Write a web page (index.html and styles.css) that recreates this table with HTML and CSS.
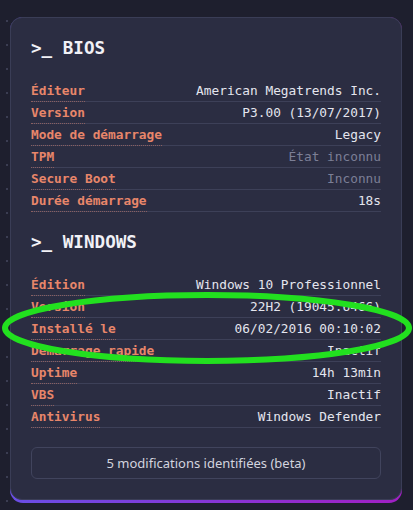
FILE: index.html
```html
<!DOCTYPE html>
<html lang="fr">
<head>
    <meta charset="UTF-8">
    <meta name="viewport" content="width=device-width, initial-scale=1.0">
    <title>Système</title>
    <link rel="stylesheet" href="styles.css">
</head>
<body>
    <div class="card-frame">
        <div class="card">
            <!-- BIOS -->
            <section class="section">
                <h2 class="section-title">&gt;_ BIOS</h2>
                <div class="info-row"><span class="info-label">Éditeur</span><span class="info-value">American Megatrends Inc.</span></div>
                <div class="info-row"><span class="info-label">Version</span><span class="info-value">P3.00 (13/07/2017)</span></div>
                <div class="info-row"><span class="info-label">Mode de démarrage</span><span class="info-value">Legacy</span></div>
                <div class="info-row"><span class="info-label">TPM</span><span class="info-value muted">État inconnu</span></div>
                <div class="info-row"><span class="info-label">Secure Boot</span><span class="info-value muted">Inconnu</span></div>
                <div class="info-row"><span class="info-label">Durée démarrage</span><span class="info-value">18s</span></div>
            </section>

            <!-- Windows -->
            <section class="section">
                <h2 class="section-title">&gt;_ WINDOWS</h2>
                <div class="info-row"><span class="info-label">Édition</span><span class="info-value">Windows 10 Professionnel</span></div>
                <div class="info-row"><span class="info-label">Version</span><span class="info-value">22H2 (19045.6466)</span></div>
                <div class="info-row"><span class="info-label">Installé le</span><span class="info-value">06/02/2016 00:10:02</span></div>
                <div class="info-row"><span class="info-label">Démarrage rapide</span><span class="info-value">Inactif</span></div>
                <div class="info-row"><span class="info-label">Uptime</span><span class="info-value">14h 13min</span></div>
                <div class="info-row"><span class="info-label">VBS</span><span class="info-value">Inactif</span></div>
                <div class="info-row"><span class="info-label">Antivirus</span><span class="info-value">Windows Defender</span></div>
            </section>

            <button type="button" class="changes-btn">5 modifications identifiées (beta)</button>
        </div>
    </div>

    <!-- annotation -->
    <svg class="annotation" width="413" height="510" viewBox="0 0 413 510">
        <ellipse cx="207" cy="328" rx="202" ry="33" fill="none" stroke="#22e01f" stroke-width="6"/>
    </svg>
</body>
</html>
```

FILE: styles.css
```css
body {
    margin: 0;
    position: relative;
    min-height: 510px;
    background-color: #1e1f2e;
    background-image: radial-gradient(circle, #3b3d52 1px, transparent 1.5px);
    background-size: 24px 24px;
    background-position: -5px 9px;
    font-family: "DejaVu Sans Mono", monospace;
}
.card-frame {
    margin: 17px 11px 0 10px;
    border-radius: 13px;
    padding-bottom: 3px;
    background: linear-gradient(90deg, #6a4ee6, #a11fc4);
}
.card {
    background: #2b2d42;
    border: 1px solid #3a3d56;
    border-radius: 12px;
    padding: 18px 20px 20px 20px;
}
.section {
    margin-bottom: 18px;
}
.section-title {
    margin: 0 0 20px 0;
    font-size: 1.1rem;
    line-height: 24px;
    font-weight: bold;
    color: #f1f1f6;
}
.info-row {
    display: flex;
    justify-content: space-between;
    border-bottom: 1px solid #3d4058;
    font-size: 0.8rem;
    line-height: 21px;
}
.info-label {
    color: #e8866a;
    font-weight: bold;
    border-bottom: 1px dotted rgba(232, 134, 106, 0.45);
    margin-bottom: -1px;
}
.info-value {
    color: #e4e5ee;
}
.info-value.muted {
    color: #7c7f96;
}
.changes-btn {
    display: block;
    width: 100%;
    height: 32px;
    margin-top: 19px;
    background: #2b2d42;
    border: 1px solid #41445d;
    border-radius: 6px;
    color: #d3d4df;
    font-family: "Noto Sans", sans-serif;
    font-size: 13px;
    cursor: pointer;
}
.annotation {
    position: absolute;
    left: 0;
    top: 0;
    pointer-events: none;
}
```
